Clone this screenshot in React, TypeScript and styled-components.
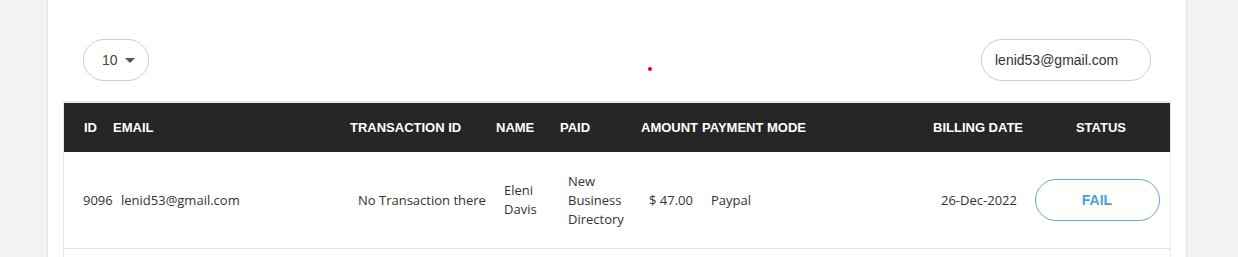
import styled, { createGlobalStyle } from 'styled-components';

const GlobalStyle = createGlobalStyle`
    html, body {
        margin: 0;
        padding: 0;
        background: #f2f2f2;
    }
`

interface Column {
    label: string,
    width: number,
    headPad: number,
    cellPad: number,
    center?: boolean
}

const columns: Column[] = [
    { label: 'ID', width: 42, headPad: 20, cellPad: 19 },
    { label: 'EMAIL', width: 237, headPad: 7, cellPad: 15 },
    { label: 'TRANSACTION ID', width: 146, headPad: 7, cellPad: 15 },
    { label: 'NAME', width: 64, headPad: 7, cellPad: 15 },
    { label: 'PAID', width: 81, headPad: 7, cellPad: 15 },
    { label: 'AMOUNT', width: 61, headPad: 7, cellPad: 15 },
    { label: 'PAYMENT MODE', width: 231, headPad: 7, cellPad: 16 },
    { label: 'BILLING DATE', width: 102, headPad: 7, cellPad: 15 },
    { label: 'STATUS', width: 142, headPad: 4, cellPad: 0, center: true },
]

const rows = [
    {
        id: '9096',
        email: 'lenid53@gmail.com',
        transaction: 'No Transaction there',
        name: 'Eleni Davis',
        paid: 'New Business Directory',
        amount: '$ 47.00',
        mode: 'Paypal',
        date: '26-Dec-2022',
        status: 'FAIL'
    }
]

const gridTemplate = columns.map(c => `${c.width}px`).join(' ');

export default function App() {
    return (
        <Page>
            <GlobalStyle />
            <Card>
                <Toolbar>
                    <LengthSelect>
                        10
                        <Caret />
                    </LengthSelect>
                    <Spacer>
                        <LoaderDot />
                    </Spacer>
                    <SearchBox>lenid53@gmail.com</SearchBox>
                </Toolbar>

                <Table>
                    <HeadRow>
                        {columns.map(c => (
                            <HeadCell key={c.label} pad={c.headPad} center={c.center}>
                                {c.label}
                            </HeadCell>
                        ))}
                    </HeadRow>

                    {rows.map(r => {
                        const values = [r.id, r.email, r.transaction, r.name, r.paid, r.amount, r.mode, r.date];
                        return (
                            <BodyRow key={r.id}>
                                {values.map((v, i) => (
                                    <Cell key={i} pad={columns[i].cellPad}>{v}</Cell>
                                ))}
                                <Cell pad={0} center>
                                    <StatusButton>{r.status}</StatusButton>
                                </Cell>
                            </BodyRow>
                        )
                    })}
                    <BodyRow />
                </Table>
            </Card>
        </Page>
    )
}

const Page = styled.div`
    display: flex;
    min-height: 257px;
    padding-left: 47px;
    overflow: hidden;
    background: #f2f2f2;
`

const Card = styled.div`
    width: 1108px;
    flex: none;
    background: #fff;
    border-left: 1px solid #e3e3e3;
    border-right: 1px solid #e3e3e3;
    padding: 39px 15px 0 15px;
`

const Toolbar = styled.div`
    display: flex;
    align-items: center;
    padding: 0 20px;
    height: 42px;
`

const Pill = styled.div`
    height: 42px;
    box-sizing: border-box;
    border: 1px solid #cccccc;
    border-radius: 21px;
    display: flex;
    align-items: center;
    font-family: "Liberation Sans", Arial, sans-serif;
    font-size: 14px;
    color: #444;
`

const LengthSelect = styled(Pill)`
    width: 66px;
    padding-left: 18px;
    gap: 7px;
`

const Caret = styled.span`
    width: 0;
    height: 0;
    border-left: 5px solid transparent;
    border-right: 5px solid transparent;
    border-top: 5px solid #555;
    margin-top: 1px;
`

const Spacer = styled.div`
    flex: 1;
    align-self: stretch;
    display: flex;
`

const LoaderDot = styled.span`
    width: 4px;
    height: 4px;
    border-radius: 50%;
    background: #ee0000;
    margin: 28px 0 0 499px;
`

const SearchBox = styled(Pill)`
    width: 170px;
    padding-left: 13px;
    color: #333;
`

const Table = styled.div`
    margin-top: 20px;
    border-top: 2px solid #e8e8e8;
    border-left: 1px solid #e8e8e8;
    border-right: 1px solid #e8e8e8;
`

const HeadRow = styled.div`
    display: grid;
    grid-template-columns: ${gridTemplate};
    height: 49px;
    align-items: center;
    background: #262626;
`

const HeadCell = styled.div<{ pad: number, center?: boolean }>`
    padding-left: ${p => p.pad}px;
    text-align: ${p => p.center ? 'center' : 'left'};
    font-family: "Liberation Sans", Arial, sans-serif;
    font-weight: bold;
    font-size: 13px;
    color: #fff;
    white-space: nowrap;
`

const BodyRow = styled.div`
    display: grid;
    grid-template-columns: ${gridTemplate};
    height: 96px;
    align-items: center;
    border-bottom: 1px solid #e3e3e3;
`

const Cell = styled.div<{ pad: number, center?: boolean }>`
    padding-left: ${p => p.pad}px;
    display: ${p => p.center ? 'flex' : 'block'};
    justify-content: center;
    font-family: "Open Sans", sans-serif;
    font-size: 13px;
    line-height: 19px;
    color: #333;
`

const StatusButton = styled.div`
    width: 125px;
    height: 42px;
    margin-right: 4px;
    box-sizing: border-box;
    border: 1px solid #67a8e0;
    border-radius: 21px;
    display: flex;
    align-items: center;
    justify-content: center;
    font-family: "Liberation Sans", Arial, sans-serif;
    font-weight: bold;
    font-size: 14px;
    color: #4f9edb;
`
